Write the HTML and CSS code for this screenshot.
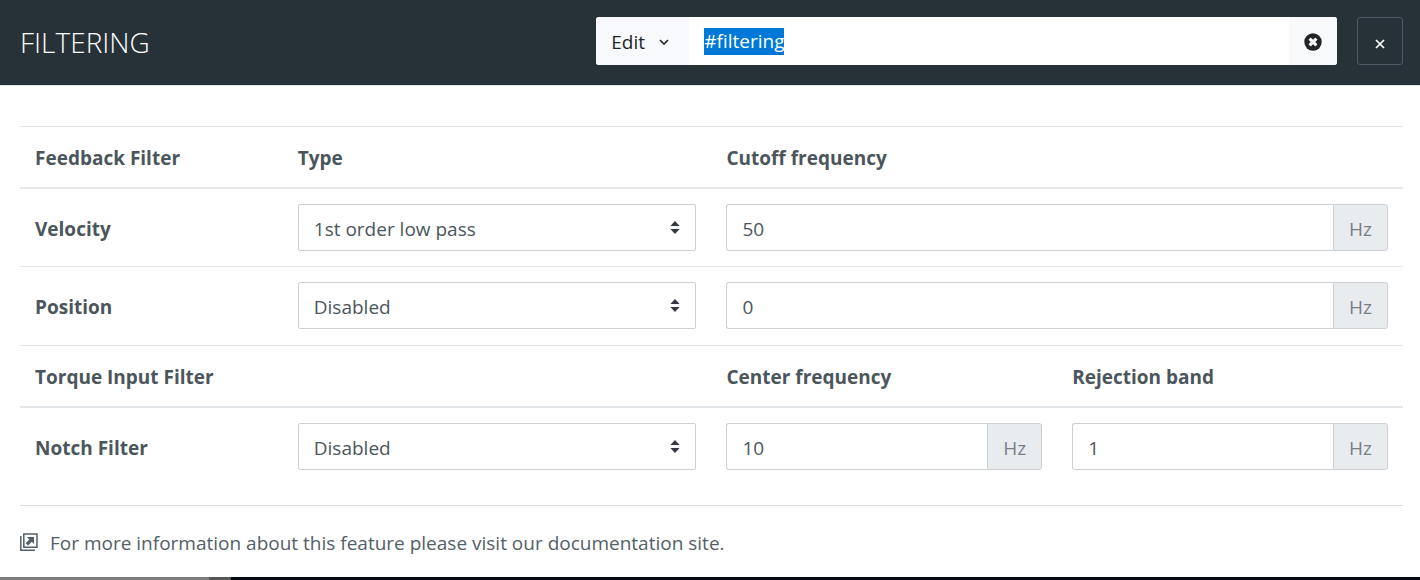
FILE: index.html
```html
<!DOCTYPE html>
<html lang="en">
<head>
<meta charset="utf-8">
<meta name="viewport" content="width=device-width, initial-scale=1">
<title>Filtering</title>
<link rel="stylesheet" href="styles.css">
</head>
<body>
<header class="topbar">
  <h1 class="title">FILTERING</h1>
  <div class="toolbar">
    <div class="search">
      <button class="edit" type="button">Edit
        <svg class="chevron" viewBox="0 0 10 6" aria-hidden="true"><path d="M1 1l4 4 4-4" fill="none" stroke="currentColor" stroke-width="1.7"/></svg>
      </button>
      <input class="query" id="query" type="text" value="#filtering" aria-label="Address" spellcheck="false">
      <button class="clear" type="button" aria-label="Clear">
        <svg class="clear-icon" viewBox="0 0 18 18" aria-hidden="true"><circle cx="9" cy="9" r="8.7" fill="currentColor"/><path d="M5.6 5.6l6.8 6.8M12.4 5.6l-6.8 6.8" stroke="#f8f9fa" stroke-width="3.2"/></svg>
      </button>
    </div>
    <button class="close" type="button" aria-label="Close">
      <svg class="close-icon" viewBox="0 0 10 10" aria-hidden="true"><path d="M1 1l8 8M9 1l-8 8" stroke="currentColor" stroke-width="1.7"/></svg>
    </button>
  </div>
</header>
<main class="content">
  <table class="filters">
    <colgroup><col class="col-name"><col class="col-type"><col class="col-value"><col class="col-value"></colgroup>
    <tbody>
      <tr class="head"><th scope="col">Feedback Filter</th><th scope="col">Type</th><th scope="col" colspan="2">Cutoff frequency</th></tr>
      <tr class="first">
        <th scope="row"><label for="velocity-type">Velocity</label></th>
        <td><div class="select"><select id="velocity-type"><option>1st order low pass</option><option>Disabled</option></select><svg class="arrows" viewBox="0 0 10 14" aria-hidden="true"><path d="M5 0l5 5.5H0zM5 14l5-5.5H0z" fill="currentColor"/></svg></div></td>
        <td colspan="2"><div class="group"><input id="velocity-hz" type="text" value="50" aria-label="Velocity cutoff frequency"><label class="unit" for="velocity-hz">Hz</label></div></td>
      </tr>
      <tr class="last">
        <th scope="row"><label for="position-type">Position</label></th>
        <td><div class="select"><select id="position-type"><option>Disabled</option><option>1st order low pass</option></select><svg class="arrows" viewBox="0 0 10 14" aria-hidden="true"><path d="M5 0l5 5.5H0zM5 14l5-5.5H0z" fill="currentColor"/></svg></div></td>
        <td colspan="2"><div class="group"><input id="position-hz" type="text" value="0" aria-label="Position cutoff frequency"><label class="unit" for="position-hz">Hz</label></div></td>
      </tr>
    </tbody>
    <tbody>
      <tr class="head"><th scope="col" colspan="2">Torque Input Filter</th><th scope="col">Center frequency</th><th scope="col">Rejection band</th></tr>
      <tr class="first">
        <th scope="row"><label for="notch-type">Notch Filter</label></th>
        <td><div class="select"><select id="notch-type"><option>Disabled</option><option>Enabled</option></select><svg class="arrows" viewBox="0 0 10 14" aria-hidden="true"><path d="M5 0l5 5.5H0zM5 14l5-5.5H0z" fill="currentColor"/></svg></div></td>
        <td><div class="group"><input id="center-hz" type="text" value="10" aria-label="Center frequency"><label class="unit" for="center-hz">Hz</label></div></td>
        <td><div class="group"><input id="band-hz" type="text" value="1" aria-label="Rejection band"><label class="unit" for="band-hz">Hz</label></div></td>
      </tr>
    </tbody>
  </table>
  <p class="more">
    <a class="doc-link" href="#documentation">
      <svg class="doc-icon" viewBox="0 0 18 18" aria-hidden="true"><path d="M3.8 1h13.2v13.2H3.8zM.8 3v14.2H15" fill="none" stroke="currentColor" stroke-width="1.5"/><path d="M7 4h7v7l-2.2-2.2L8 12.5 5.7 10.2 9.3 6.4z" fill="currentColor"/></svg>
      For more information about this feature please visit our documentation site.
    </a>
  </p>
</main>
<div class="strip"><span class="strip-done"></span><span class="strip-edge"></span></div>
<script src="main.js"></script>
</body>
</html>
```
FILE: styles.css
```css
* { box-sizing: border-box; }

body {
  margin: 0;
  min-height: 100vh;
  display: flex;
  flex-direction: column;
  background: #fff;
  color: #4b565c;
  font: 19px/30px "Open Sans", "Noto Sans", sans-serif;
}

button, input, select { font: inherit; color: inherit; margin: 0; border-radius: 0; }

.topbar {
  display: grid;
  grid-template-columns: 5fr 7fr;
  padding: 17px 17px 20px 20px;
  background: #263238;
  border-bottom: 1px solid #e4e7ea;
}

.title {
  margin: 0;
  padding-top: 2px;
  color: #fff;
  font-size: 28px;
  font-weight: 300;
  line-height: 46px;
}

.toolbar { display: flex; gap: 20px; }

.search {
  flex: 1;
  min-width: 0;
  height: 48px;
  display: flex;
  overflow: hidden;
  border-radius: 3px;
  background: #fff;
  color: #212529;
}

.edit {
  width: 93px;
  display: flex;
  align-items: center;
  gap: 14px;
  padding: 2px 15px 0;
  border: 0;
  background: #f8f9fc;
}

.chevron { width: 10px; height: 6px; }

.query {
  flex: 1;
  min-width: 0;
  padding: 0 15px;
  border: 0;
  outline: 0;
  background: #fff;
  line-height: 27px;
}

.query::selection { background: #0078d7; color: #fff; }

.clear {
  width: 48px;
  display: grid;
  place-items: center;
  padding: 1px 1px 0 0;
  border: 0;
  background: #f8f9fa;
}

.clear-icon { width: 18px; height: 18px; }

.close {
  width: 46px;
  height: 48px;
  display: grid;
  place-items: center;
  padding: 5px 0 0;
  border: 1px solid #4f5b62;
  border-radius: 3px;
  background: transparent;
  color: #fff;
}

.close-icon { width: 10px; height: 10px; }

.content { padding: 40px 17px 0 20px; }

.filters {
  width: 100%;
  table-layout: fixed;
  border-spacing: 0;
}

.col-name { width: 19%; }
.col-type { width: 31%; }
.col-value { width: 25%; }

th, td { padding: 15px; text-align: left; border-top: 1px solid #e4e7ea; }
th { font-weight: 700; }
.head th { padding: 16px 15px 14px; border-bottom: 2px solid #e4e7ea; }
.first th, .first td { border-top: 0; }
.last th, .last td { padding-bottom: 16px; }

th[scope="row"] { padding-top: 18px; }

.select { position: relative; }

.select select {
  display: block;
  width: 100%;
  height: 47px;
  padding: 2px 36px 0 15px;
  border: 1px solid #ccd0d4;
  border-radius: 2px;
  background: #fff;
  appearance: none;
}

.arrows {
  position: absolute;
  top: 17px;
  right: 16px;
  width: 10px;
  height: 13px;
  color: #343a40;
  pointer-events: none;
}

.group { display: flex; height: 47px; }

.group input {
  flex: 1;
  min-width: 0;
  padding: 2px 15px 0;
  border: 1px solid #ccd0d4;
  border-right: 0;
  border-radius: 3px 0 0 3px;
  background: #fff;
}

.unit {
  width: 55px;
  padding: 9px 0 0;
  border: 1px solid #ccd0d4;
  border-radius: 0 3px 3px 0;
  background: #e9ecef;
  color: #788086;
  line-height: 30px;
  text-align: center;
}

.more {
  margin: 20px 0 0;
  padding-top: 22px;
  border-top: 1px solid #dcdfe2;
}

.doc-link {
  display: flex;
  align-items: center;
  gap: 12px;
  color: #536068;
  text-decoration: none;
}

.doc-icon { flex: none; width: 18px; height: 18px; margin-bottom: 3px; }

.strip { display: flex; height: 3px; margin-top: auto; background: #050b14; }
.strip-done { width: 209px; background: #7b7b7b; }
.strip-edge { width: 22px; background: #575757; }
```
FILE: main.js
```js
const query = document.getElementById("query");
query.focus();
query.select();
```
